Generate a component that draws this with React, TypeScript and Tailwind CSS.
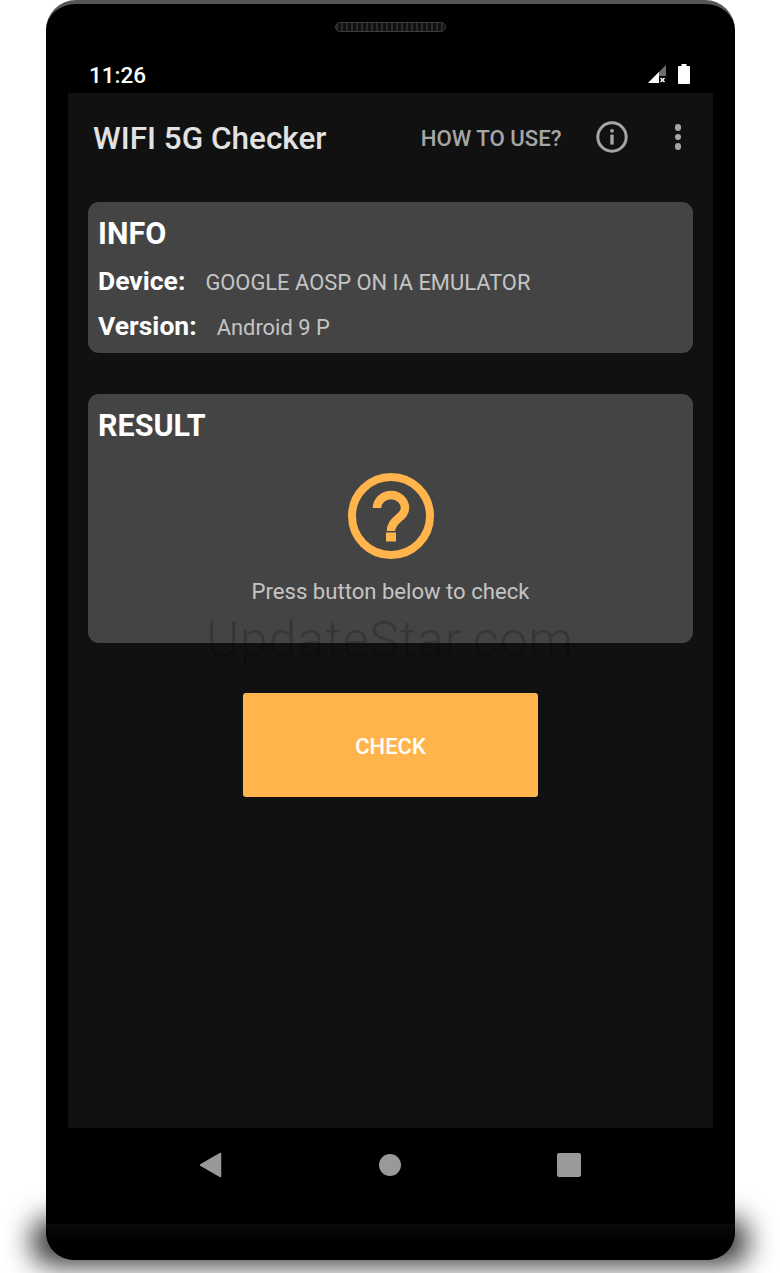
const font = "font-['Roboto',sans-serif]";

function InfoIcon() {
  return (
    <svg viewBox="0 0 32 32" className="h-8 w-8" fill="none">
      <circle cx="16" cy="16" r="14.2" stroke="#a6a6a6" strokeWidth="3" />
      <circle cx="16" cy="9.8" r="1.9" fill="#a6a6a6" />
      <rect x="14.3" y="13.6" width="3.4" height="10" fill="#a6a6a6" />
    </svg>
  );
}

function QuestionIcon() {
  return (
    <svg viewBox="0 0 86 86" className="h-[86px] w-[86px]" fill="none">
      <circle cx="43" cy="43" r="39" stroke="#ffb54c" strokeWidth="8" />
      <path
        d="M29 35A14 13 0 0 1 57 35C57 45 43 46 43 58"
        stroke="#ffb54c"
        strokeWidth="8.500"
      />
      <rect x="38" y="59.500" width="10" height="9" fill="#ffb54c" />
    </svg>
  );
}

function StatusIcons() {
  return (
    <div className="mb-[5px] mr-[2px] flex items-end gap-[11px]">
      <svg viewBox="0 0 20 20" className="h-5 w-5">
        <path d="M1 19 19 1v18z" fill="#6e6e6e" />
        <path d="M1 19 12 8v11z" fill="#ffffff" />
        <rect x="12" y="12" width="8" height="8" fill="#000000" />
        <path d="m13.500 14 4 4m0-4-4 4" stroke="#ffffff" strokeWidth="1.500" />
      </svg>
      <svg viewBox="0 0 12 20" className="mb-[0.5px] h-5 w-3">
        <path d="M3.500 0h5v2H11a1 1 0 0 1 1 1v16a1 1 0 0 1-1 1H1a1 1 0 0 1-1-1V3a1 1 0 0 1 1-1h2.500z" fill="#ffffff" />
      </svg>
    </div>
  );
}

function NavIcons() {
  return (
    <div className="flex h-[74px] items-center justify-between pl-[153px] pr-[154px]">
      <svg viewBox="0 0 23 26" className="h-[26px] w-[23px]">
        <path d="M21.500 1.500v23L1.500 13z" fill="#999999" stroke="#999999" strokeWidth="1.500" strokeLinejoin="round" />
      </svg>
      <span className="h-[22px] w-[22px] rounded-full bg-[#999999]" />
      <span className="h-[24px] w-[24px] rounded-[2px] bg-[#999999]" />
    </div>
  );
}

function InfoRow({ label, value }: { label: string; value: string }) {
  return (
    <div className="flex items-baseline gap-[20px]">
      <span className="text-[26.500px] font-bold leading-[43px] text-white">{label}</span>
      <span className="text-[21.900px] leading-[43px] text-[#c4c4c4]">{value}</span>
    </div>
  );
}

export default function App() {
  return (
    <div className={`relative h-[1273px] w-[780px] overflow-hidden bg-white ${font}`}>
      <div className="absolute bottom-[8px] left-[32px] right-[32px] top-[1218px] rounded-[20px] bg-black/80 blur-[14px]" />

      <div className="relative ml-[46px] h-[1260px] w-[689px] rounded-b-[28px] rounded-t-[30px] border-t-[4px] border-[#555555] bg-black">
        <div className="absolute left-[289px] top-[18px] h-[10px] w-[111px] rounded-full border border-[#3c3c3c] bg-[repeating-linear-gradient(90deg,#2a2a2a_0px,#2a2a2a_2px,#111111_2px,#111111_5px)]" />

        <div className="flex h-[89px] items-end justify-between pb-[4px] pl-[43px] pr-[43px]">
          <span className="text-[22.5px] font-medium leading-[28px] text-white">11:26</span>
          <StatusIcons />
        </div>

        <div className="mx-[22px] h-[1035px] bg-[#111111] px-[20px]">
          <div className="flex h-[88px] items-center pl-[5px] pt-[3px]">
            <span className="text-[31.500px] font-medium text-[#e2e2e2]">WIFI 5G Checker</span>
            <span className="ml-auto text-[22.200px] font-medium text-[#a6a6a6]">HOW TO USE?</span>
            <span className="mb-[3px] ml-[34px]">
              <InfoIcon />
            </span>
            <span className="mb-[3px] ml-[47px] mr-[12px] flex flex-col gap-[3px]">
              <span className="h-[6.500px] w-[6.500px] rounded-full bg-[#a6a6a6]" />
              <span className="h-[6.500px] w-[6.500px] rounded-full bg-[#a6a6a6]" />
              <span className="h-[6.500px] w-[6.500px] rounded-full bg-[#a6a6a6]" />
            </span>
          </div>

          <section className="mt-[21px] h-[151px] rounded-[11px] bg-[#444444] px-[10px] pt-[9px]">
            <h2 className="text-[30.500px] font-bold leading-[45px] text-white">INFO</h2>
            <div className="mt-[3px]">
              <InfoRow label="Device:" value="GOOGLE AOSP ON IA EMULATOR" />
              <InfoRow label="Version:" value="Android 9 P" />
            </div>
          </section>

          <section className="mt-[41px] flex h-[249px] flex-col rounded-[11px] bg-[#444444] px-[10px] pt-[9px]">
            <h2 className="text-[30.500px] font-bold leading-[45px] text-white">RESULT</h2>
            <div className="mt-[25px] flex flex-col items-center">
              <QuestionIcon />
              <p className="mt-[15px] text-[22.100px] leading-[34px] text-[#c4c4c4]">Press button below to check</p>
            </div>
          </section>

          <div className="mt-[50px] flex justify-center">
            <button
              type="button"
              className="flex h-[104px] w-[295px] items-center justify-center rounded-[3px] bg-[#ffb54c] pt-[3px] text-[22px] font-medium text-white"
            >
              CHECK
            </button>
          </div>
        </div>

        <NavIcons />
        <div className="mt-[22px] h-[36px] rounded-b-[28px] bg-gradient-to-b from-[#0a0a0a] to-black" />
      </div>

      <div className="pointer-events-none absolute left-0 top-[610px] w-[780px] text-center text-[50px] font-light leading-[60px] tracking-[1px] text-black/20">
        UpdateStar.com
      </div>
    </div>
  );
}
